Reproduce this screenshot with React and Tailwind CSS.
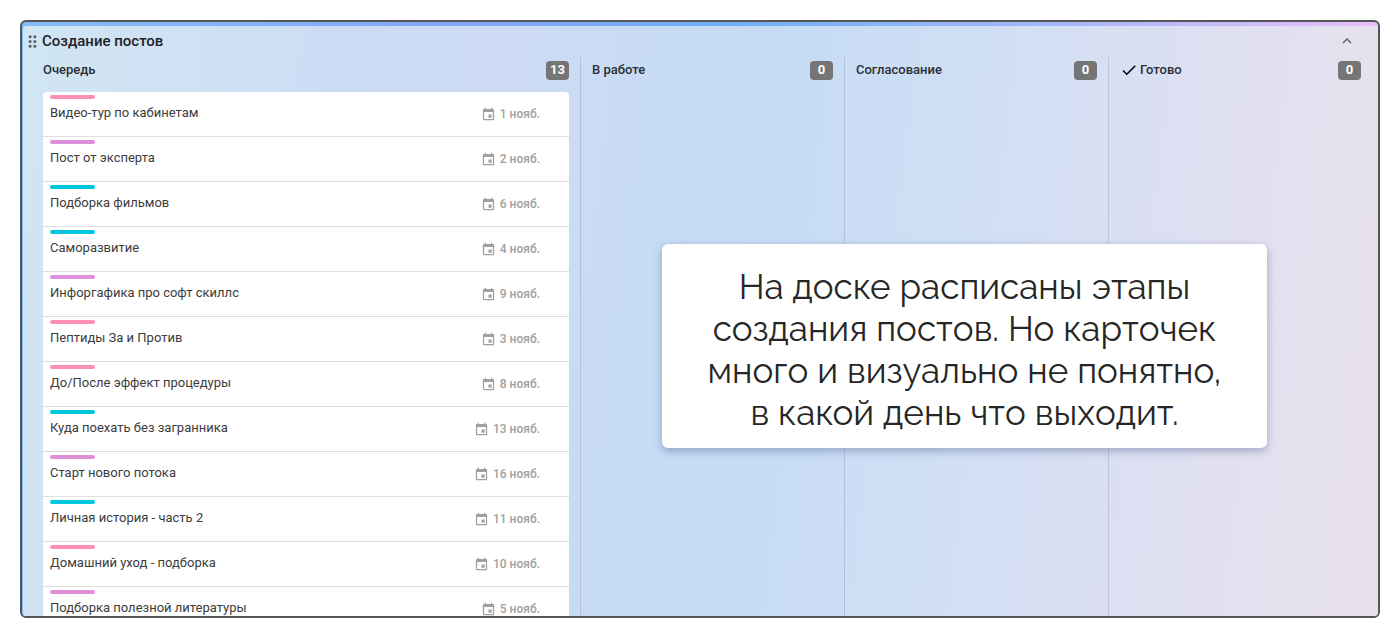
import React, { useState } from 'react';
import { MdCheck, MdDragIndicator, MdEvent, MdExpandLess } from 'react-icons/md';

const labelColors = {
  pink: 'bg-[#ff8fb1]',
  purple: 'bg-[#e08fdb]',
  cyan: 'bg-[#00c8dc]',
};

const cards = [
  { title: 'Видео-тур по кабинетам', date: '1 нояб.', label: 'pink' },
  { title: 'Пост от эксперта', date: '2 нояб.', label: 'purple' },
  { title: 'Подборка фильмов', date: '6 нояб.', label: 'cyan' },
  { title: 'Саморазвитие', date: '4 нояб.', label: 'cyan' },
  { title: 'Инфоргафика про софт скиллс', date: '9 нояб.', label: 'purple' },
  { title: 'Пептиды За и Против', date: '3 нояб.', label: 'pink' },
  { title: 'До/После эффект процедуры', date: '8 нояб.', label: 'pink' },
  { title: 'Куда поехать без загранника', date: '13 нояб.', label: 'cyan' },
  { title: 'Старт нового потока', date: '16 нояб.', label: 'purple' },
  { title: 'Личная история - часть 2', date: '11 нояб.', label: 'cyan' },
  { title: 'Домашний уход - подборка', date: '10 нояб.', label: 'pink' },
  { title: 'Подборка полезной литературы', date: '5 нояб.', label: 'purple' },
];

function Card({ title, date, label }) {
  return (
    <li className="h-[45px] shrink-0 border-b border-[#dedede] bg-white pl-[7px] pr-[29px] pt-[3px]">
      <div className={`h-1 w-[45px] rounded-full ${labelColors[label]}`} />
      <div className="flex items-center justify-between pt-0.5">
        <span className="truncate text-[13px] leading-6 text-[#3c3c3c]">{title}</span>
        <span className="flex shrink-0 items-center gap-1 pt-0.5 text-xs font-medium text-[#a0a0a0]">
          <MdEvent className="size-[15px]" />
          {date}
        </span>
      </div>
    </li>
  );
}

function ColumnHeader({ title, count, done }) {
  return (
    <header className="flex h-[26px] items-center justify-between">
      <h2 className="flex items-center gap-0.5 text-[13px] font-medium text-[#2b2f36]">
        {done && <MdCheck className="size-[18px] text-black" />}
        {title}
      </h2>
      <span className="flex h-[19px] w-[23px] items-center justify-center rounded bg-[#757575] text-[13px] font-bold text-white">
        {count}
      </span>
    </header>
  );
}

export default function App() {
  const [isOpen, setIsOpen] = useState(true);

  return (
    <div className="h-screen bg-white px-5 pt-5 pb-[22px] font-['Roboto','Liberation_Sans',sans-serif]">
      <main className="relative flex h-full flex-col overflow-hidden rounded-md border-2 border-[#555] bg-[linear-gradient(90deg,#82bdfa,#84a6ff_33%,#6fb0fb_52%,#a9b8fb_78%,#e8bdfb)] pt-1 pl-px">
        <div className="flex min-h-0 flex-1 flex-col rounded-tl bg-[linear-gradient(97deg,#d0e6f3,#d0e2f4_10%,#cddcf5_22%,#cddbf5_36%,#c6dbf4_48%,#c7dcf4_56%,#d0dff5_68%,#dbdff2_80%,#e4e1f0_91%,#e8e1ec)]">
          <div className="flex h-[30px] shrink-0 items-center pr-[22px]">
            <MdDragIndicator className="size-[19px] text-[#5c6068]" />
            <h1 className="flex-1 text-[15px] font-medium text-[#1f2329]">Создание постов</h1>
            <button type="button" aria-label="Свернуть" onClick={() => setIsOpen(!isOpen)}>
              <MdExpandLess className="size-[18px] text-[#5c6068]" />
            </button>
          </div>

          {isOpen && (
            <div className="mt-px grid min-h-0 flex-1 grid-cols-[557fr_264fr_264fr_264fr] pr-1.5">
              <section className="flex min-h-0 flex-col pl-5 pr-[11px]">
                <ColumnHeader title="Очередь" count={13} />
                <ul className="mt-[9px] flex min-h-0 flex-1 flex-col overflow-hidden rounded-t-sm">
                  {cards.map((card) => (
                    <Card key={card.title} {...card} />
                  ))}
                </ul>
              </section>
              <section className="border-l border-[#b3c2dc] pl-[11px] pr-[11px]">
                <ColumnHeader title="В работе" count={0} />
              </section>
              <section className="border-l border-[#b3c2dc] pl-[11px] pr-[11px]">
                <ColumnHeader title="Согласование" count={0} />
              </section>
              <section className="border-l border-[#bfc6dc] pl-[11px] pr-[11px]">
                <ColumnHeader title="Готово" count={0} done />
              </section>
            </div>
          )}
        </div>

        {/* Подсказка поверх доски */}
        <aside className="absolute top-[222px] right-[111px] w-[605px] rounded-md bg-white pt-[22px] pb-[14px] text-center shadow-[0_3px_8px_rgba(60,80,130,0.4)]">
          <p className="font-['Raleway','Inter',sans-serif] text-[35px] leading-[42px] text-[#262626]">
            На доске расписаны этапы
            <br />
            создания постов. Но карточек
            <br />
            много и визуально не понятно,
            <br />
            в какой день что выходит.
          </p>
        </aside>
      </main>
    </div>
  );
}
